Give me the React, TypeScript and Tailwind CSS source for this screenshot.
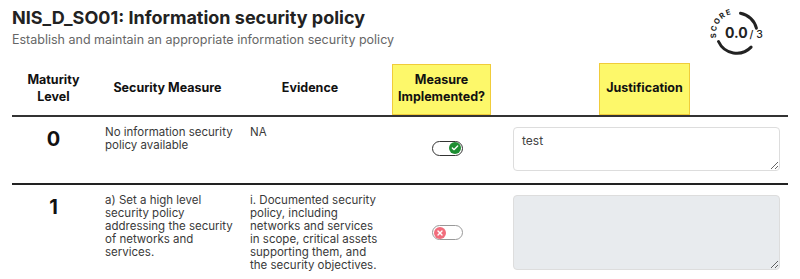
import { Check, X } from 'lucide-react';

const font = { fontFamily: 'Inter, "Noto Sans", sans-serif' };

const ScoreBadge = () => (
  <svg width="64" height="52" viewBox="0 0 64 52" className="shrink-0">
    <defs>
      <path id="scorePath" d="M 11.5 31 A 19.5 19.5 0 0 1 33 7" />
    </defs>
    <path d="M 35.5 6.3 A 20 20 0 0 1 51.4 21.2" fill="none" stroke="#222" strokeWidth="3" strokeLinecap="round" />
    <path d="M 46.1 40.1 A 20 20 0 0 1 13.5 34.5" fill="none" stroke="#222" strokeWidth="3" strokeLinecap="round" />
    <text fontSize="7.5" fontWeight="700" fill="#222" letterSpacing="1.3" fontFamily="Inter, sans-serif">
      <textPath href="#scorePath">SCORE</textPath>
    </text>
    <text x="20" y="31" fontSize="14" fontWeight="700" fill="#222" fontFamily="Inter, sans-serif">0.0</text>
    <text x="44.5" y="31" fontSize="10.5" fontWeight="500" fill="#222" fontFamily="Inter, sans-serif">/ 3</text>
  </svg>
);

const Toggle = ({ on }: { on: boolean }) =>
  on ? (
    <div className="flex h-[15px] w-[31px] items-center justify-end rounded-full border-[1.5px] border-[#333] bg-white px-[1px]">
      <div className="flex h-[12px] w-[12px] items-center justify-center rounded-full bg-[#1e8e33]">
        <Check size={8} strokeWidth={4} color="white" />
      </div>
    </div>
  ) : (
    <div className="flex h-[15px] w-[31px] items-center justify-start rounded-full border-[1.5px] border-[#999] bg-white px-[1px]">
      <div className="flex h-[12px] w-[12px] items-center justify-center rounded-full bg-[#f16d7c]">
        <X size={8} strokeWidth={4} color="white" />
      </div>
    </div>
  );

const rows = [
  {
    level: '0',
    measure: ['No information security', 'policy available'],
    evidence: ['NA'],
    on: true,
    text: 'test',
    disabled: false,
    h: 'h-[44px]',
  },
  {
    level: '1',
    measure: ['a) Set a high level', 'security policy', 'addressing the security', 'of networks and', 'services.'],
    evidence: [
      'i. Documented security',
      'policy, including',
      'networks and services',
      'in scope, critical assets',
      'supporting them, and',
      'the security objectives.',
    ],
    on: false,
    text: '',
    disabled: true,
    h: 'h-[75px]',
  },
];

const cols = 'grid grid-cols-[83px_145px_140px_123px_1fr]';

const Lines = ({ lines }: { lines: string[] }) => (
  <div className="whitespace-nowrap pl-2.5 pt-px text-[11.5px] leading-[13px] text-[#3a3a3a]">
    {lines.map((l) => (
      <div key={l}>{l}</div>
    ))}
  </div>
);

export default function App() {
  return (
    <div className="w-[800px] bg-white px-3 pt-1 text-[#222]" style={font}>
      <div className="flex items-start justify-between">
        <div>
          <h1 className="text-[18px] font-bold leading-7 text-[#222]">NIS_D_SO01: Information security policy</h1>
          <p className="text-[12.5px] leading-4 text-[#666]">Establish and maintain an appropriate information security policy</p>
        </div>
        <div className="mr-[19px] mt-[3px]">
          <ScoreBadge />
        </div>
      </div>

      <div className={`${cols} mt-[4px] items-end border-b-2 border-[#333] text-[12.5px] font-bold leading-[17px] text-[#111]`}>
        <div className="flex h-[51px] items-center justify-center pb-1 text-center">
          Maturity
          <br />
          Level
        </div>
        <div className="flex h-[51px] items-center justify-center pb-1">Security Measure</div>
        <div className="flex h-[51px] items-center justify-center pb-1">Evidence</div>
        <div className="ml-3 flex h-[51px] w-[99px] items-center justify-center border border-[#f0cc3a] bg-[#fdf86a] pb-1 text-center">
          Measure
          <br />
          Implemented?
        </div>
        <div className="ml-[96px] flex h-[52px] w-[91px] items-center justify-center border border-[#f0cc3a] bg-[#fdf86a] pb-1">
          Justification
        </div>
      </div>

      {rows.map((r) => (
        <div key={r.level} className={`${cols} border-b-2 border-[#222] pt-2 pb-3`}>
          <div className="text-center text-[20px] font-bold leading-7 text-[#111]">{r.level}</div>
          <Lines lines={r.measure} />
          <Lines lines={r.evidence} />
          <div className="ml-[52px] self-center">
            <Toggle on={r.on} />
          </div>
          <textarea
            defaultValue={r.text}
            disabled={r.disabled}
            className={`ml-2.5 mt-0.5 ${r.h} w-[267px] rounded-[4px] border border-[#ddd] px-2 py-1 text-[12px] text-[#444] ${
              r.disabled ? 'bg-[#e8ebee]' : 'bg-white'
            }`}
          />
        </div>
      ))}
    </div>
  );
}
